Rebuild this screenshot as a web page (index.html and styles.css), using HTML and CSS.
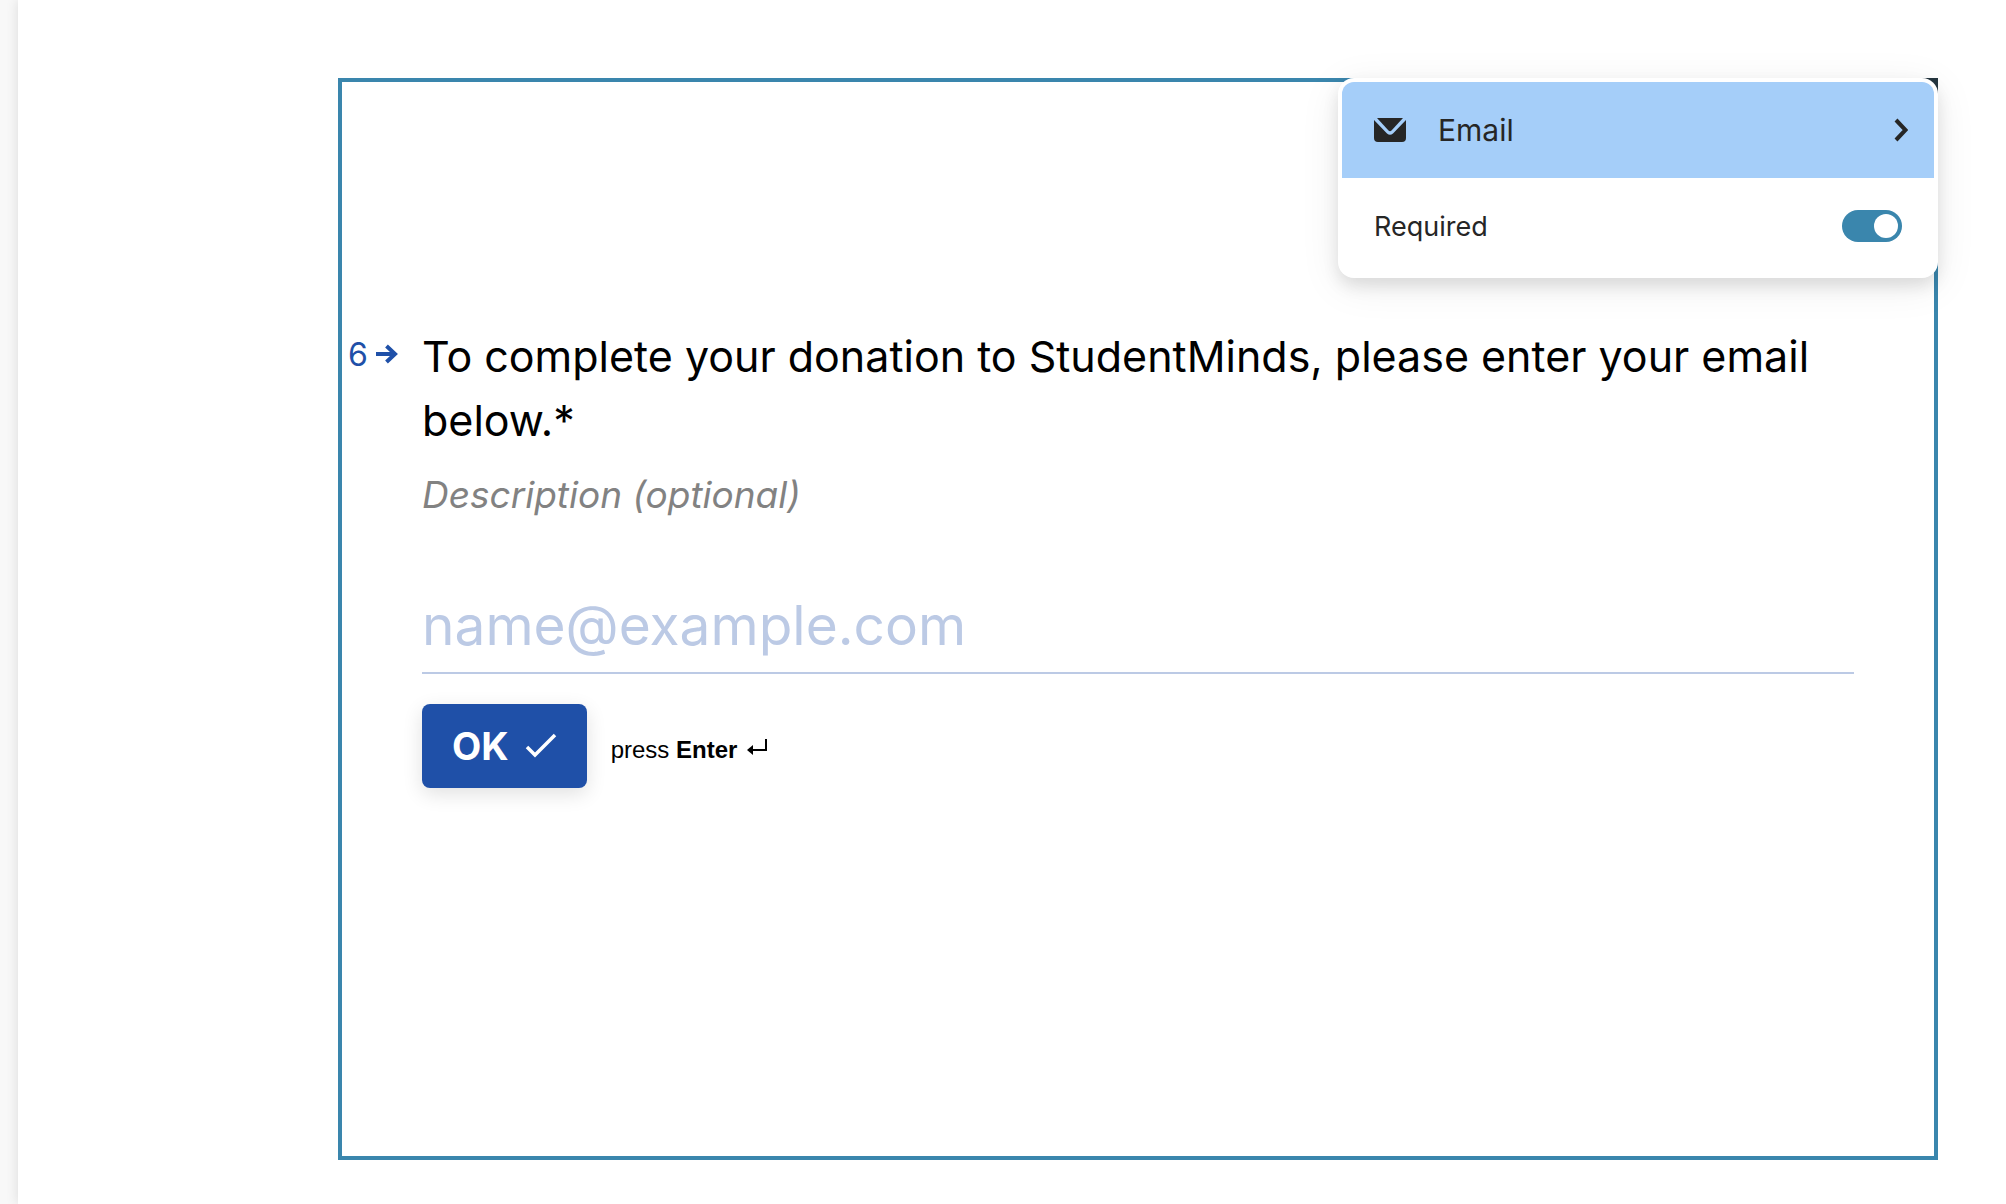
FILE: index.html
```html
<!DOCTYPE html>
<html lang="en">
<head>
<meta charset="utf-8">
<title>Form editor</title>
<link rel="stylesheet" href="styles.css">
</head>
<body>
<div class="app">
  <main class="canvas">
    <section class="frame">
      <div class="question">
        <div class="number">
          <span>6</span>
          <svg width="22" height="20" viewBox="0 0 22 20" aria-hidden="true"><path d="M0 10h19M10.500 2l8.500 8-8.500 8" fill="none" stroke="currentColor" stroke-width="4"/></svg>
        </div>
        <div class="body">
          <h1 class="title"><label for="answer">To complete your donation to StudentMinds, please enter your email below.*</label></h1>
          <input class="description" type="text" placeholder="Description (optional)" aria-label="Description">
          <input class="answer" id="answer" type="email" placeholder="name@example.com">
          <div class="actions">
            <button class="ok" type="button">OK
              <svg width="32" height="26" viewBox="0 0 32 26" aria-hidden="true"><path d="M2 14l8 8L30 2" fill="none" stroke="currentColor" stroke-width="3.500"/></svg>
            </button>
            <div class="hint"><span>press <strong>Enter</strong></span>
              <svg width="20" height="22" viewBox="0 0 20 22" aria-hidden="true"><path d="M19 0v11H4" fill="none" stroke="currentColor" stroke-width="2"/><path d="M0 11l6-5v10z" fill="currentColor"/></svg>
            </div>
          </div>
        </div>
      </div>
      <div class="corner"></div>
      <aside class="panel">
        <button class="type" type="button">
          <svg width="32" height="24" viewBox="0 0 32 24" aria-hidden="true"><path d="M3 0h26L17.500 12.500q-1.500 1.500-3 0z" fill="currentColor"/><path d="M0 2l13 13.500q3 2.500 6 0L32 2v18q0 4-4 4H4q-4 0-4-4z" fill="currentColor"/></svg>
          <span>Email</span>
          <svg class="chevron" width="14" height="24" viewBox="0 0 14 24" aria-hidden="true"><path d="M2 2l9.500 10L2 22" fill="none" stroke="currentColor" stroke-width="4"/></svg>
        </button>
        <div class="setting">
          <label for="required">Required</label>
          <input class="toggle" id="required" type="checkbox" role="switch" checked>
        </div>
      </aside>
    </section>
  </main>
</div>
</body>
</html>
```
FILE: styles.css
```css
* {
  box-sizing: border-box;
}

body {
  margin: 0;
  background: #f8f8f8;
  color: #000;
  font-family: Inter, "Liberation Sans", sans-serif;
}

button,
input {
  margin: 0;
  border: 0;
  font: inherit;
}

svg {
  display: block;
  flex: none;
}

.app {
  padding-left: 18px;
}

.canvas {
  display: flex;
  min-height: 100vh;
  padding: 78px 68px 44px 320px;
  background: #fff;
  box-shadow: 0 0 12px rgba(0, 0, 0, 0.12);
}

.frame {
  position: relative;
  flex: 1;
  padding: 242px 80px 80px 6px;
  border: 4px solid #3a86ad;
}

.question {
  display: flex;
}

.number {
  display: flex;
  flex: none;
  align-items: center;
  gap: 8px;
  width: 74px;
  height: 60px;
  color: #1f50a8;
  font-size: 32px;
}

.body {
  flex: 1;
  min-width: 0;
}

.title {
  margin: 0;
  font-size: 43px;
  font-weight: 400;
  line-height: 64px;
}

.description,
.answer {
  display: block;
  width: 100%;
  padding: 0;
  background: none;
  outline: 0;
}

.description {
  height: 56px;
  margin-top: 14px;
  font-size: 37px;
  font-style: italic;
}

.description::placeholder {
  color: #828282;
  opacity: 1;
}

.answer {
  height: 96px;
  margin-top: 56px;
  border-bottom: 2px solid #bccae5;
  font-size: 55px;
}

.answer::placeholder {
  color: #bccae5;
  opacity: 1;
}

.actions {
  display: flex;
  align-items: center;
  gap: 24px;
  margin-top: 30px;
}

.ok {
  display: flex;
  align-items: center;
  gap: 16px;
  height: 84px;
  padding: 0 30px;
  border-radius: 8px;
  background: #1f50a8;
  box-shadow: 0 6px 20px rgba(0, 0, 0, 0.12);
  color: #fff;
  font-size: 38px;
  font-weight: 700;
}

.hint {
  display: flex;
  align-items: center;
  gap: 10px;
  padding-top: 8px;
  font-family: "Liberation Sans", Arial, sans-serif;
  font-size: 24px;
}

.corner {
  position: absolute;
  top: -4px;
  right: -4px;
  width: 24px;
  height: 24px;
  background: #263640;
}

.panel {
  position: absolute;
  top: -4px;
  right: -4px;
  width: 600px;
  padding: 4px;
  border-radius: 16px;
  background: #fff;
  box-shadow: 0 8px 16px rgba(0, 0, 0, 0.1), 0 8px 40px rgba(0, 0, 0, 0.08);
  color: #262626;
}

.type {
  display: flex;
  align-items: center;
  gap: 32px;
  width: 100%;
  height: 96px;
  padding: 0 26px 0 32px;
  border-radius: 12px 12px 0 0;
  background: #a5cef9;
  color: inherit;
  font-size: 30px;
}

.chevron {
  margin-left: auto;
}

.setting {
  display: flex;
  align-items: center;
  justify-content: space-between;
  height: 96px;
  padding: 0 32px;
  font-size: 27px;
}

.toggle {
  width: 60px;
  height: 32px;
  padding: 4px;
  border-radius: 16px;
  background: #3a86ad;
  appearance: none;
}

.toggle::before {
  display: block;
  width: 24px;
  height: 24px;
  border-radius: 50%;
  background: #fff;
  content: "";
}

.toggle:checked::before {
  margin-left: auto;
}
```
